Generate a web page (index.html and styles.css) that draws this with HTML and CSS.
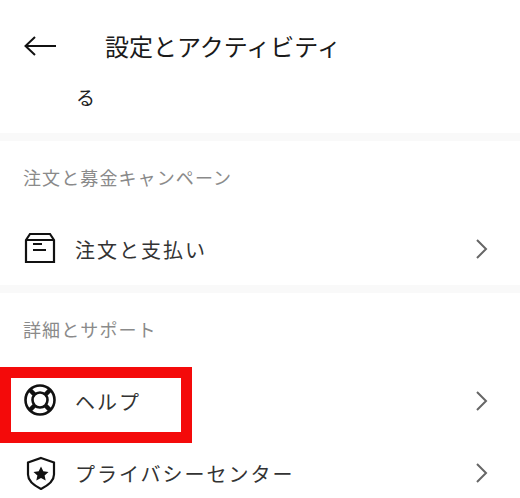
FILE: index.html
```html
<!DOCTYPE html>
<html lang="ja">
  <head>
    <meta charset="UTF-8" />
    <title>設定とアクティビティ</title>
    <link rel="stylesheet" href="styles.css">
  </head>
  <body>
    <div class="page">
      <div class="topBar">
        <svg class="back" width="36" height="24" viewBox="0 0 36 24" fill="none" stroke="#111" stroke-width="2">
          <path d="M3 12h31M13 3l-9.500 9 9.500 9" />
        </svg>
        <h1 class="title">設定とアクティビティ</h1>
      </div>
      <div class="cutText">る</div>
      <div class="gap"></div>

      <div class="sectionTitle">注文と募金キャンペーン</div>
      <div class="row">
        <svg class="icon" width="34" height="34" viewBox="0 0 34 34" fill="none" stroke="#111" stroke-width="2.200">
          <path d="M3 8l4-6h20l4 6v22H3zM3 8h28" />
          <path d="M10 12h9M10 18h13" stroke-width="2" />
        </svg>
        <span class="label">注文と支払い</span>
        <svg class="arrow" width="14" height="22" viewBox="0 0 14 22" fill="none" stroke="#666" stroke-width="2">
          <path d="M2 2l9 9-9 9" />
        </svg>
      </div>
      <div class="gap"></div>

      <div class="sectionTitle">詳細とサポート</div>
      <div class="row">
        <svg class="icon" width="34" height="34" viewBox="0 0 34 34" fill="none" stroke="#111" stroke-width="2.600">
          <circle cx="17" cy="16" r="14.500" />
          <circle cx="17" cy="16" r="7.500" />
          <path d="M7 6l5 5M27 6l-5 5M7 26l5-5M27 26l-5-5" stroke-width="4.500" />
        </svg>
        <span class="label">ヘルプ</span>
        <svg class="arrow" width="14" height="22" viewBox="0 0 14 22" fill="none" stroke="#666" stroke-width="2">
          <path d="M2 2l9 9-9 9" />
        </svg>
      </div>
      <div class="row">
        <svg class="icon" width="34" height="34" viewBox="0 0 34 34" fill="none" stroke="#111" stroke-width="2.200">
          <path d="M18 2l13 4.500v12c0 6.500-5 10.500-13 14.500C10 29 5 25 5 18.500v-12z" />
          <path d="M18 10.500l2.300 4.800 5.200.6-3.900 3.500 1.100 5.100-4.700-2.600-4.700 2.600 1.100-5.100-3.900-3.500 5.200-.6z" fill="#111" stroke="none" />
        </svg>
        <span class="label">プライバシーセンター</span>
        <svg class="arrow" width="14" height="22" viewBox="0 0 14 22" fill="none" stroke="#666" stroke-width="2">
          <path d="M2 2l9 9-9 9" />
        </svg>
      </div>

      <div class="redBox"></div>
    </div>
  </body>
</html>
```

FILE: styles.css
```css
* {
  margin: 0;
  padding: 0;
  box-sizing: border-box;
}
body {
  background: #fff;
  font-family: "Noto Sans CJK JP", "Noto Sans", sans-serif;
  color: #222;
}
.page {
  position: relative;
  width: 520px;
  height: 498px;
  overflow: hidden;
}
/*上のバー*/
.topBar {
  display: flex;
  align-items: center;
  height: 46px;
  margin-top: 23px;
  padding-left: 22px;
}
.title {
  margin-left: 47px;
  font-size: 24px;
  font-weight: 400;
  color: #1a1a1a;
  line-height: 30px;
}
.cutText {
  padding-left: 76px;
  height: 64px;
  padding-top: 15px;
  font-size: 19px;
  line-height: 26px;
}
.gap {
  height: 8px;
  background: #f9f9f9;
}
.sectionTitle {
  height: 72px;
  padding: 25px 0 0 23px;
  font-size: 18px;
  letter-spacing: 1.100px;
  line-height: 22px;
  color: #8a8a8a;
}
/*行*/
.row {
  display: flex;
  align-items: center;
  height: 72px;
  padding: 0 31px 0 23px;
}
.label {
  margin-left: 18px;
  flex: 1;
  font-size: 20px;
  letter-spacing: 2px;
  color: #333;
}
/*赤い枠*/
.redBox {
  position: absolute;
  left: 0;
  top: 367px;
  width: 192px;
  height: 76px;
  border: 11px solid #f40a0a;
}
```
